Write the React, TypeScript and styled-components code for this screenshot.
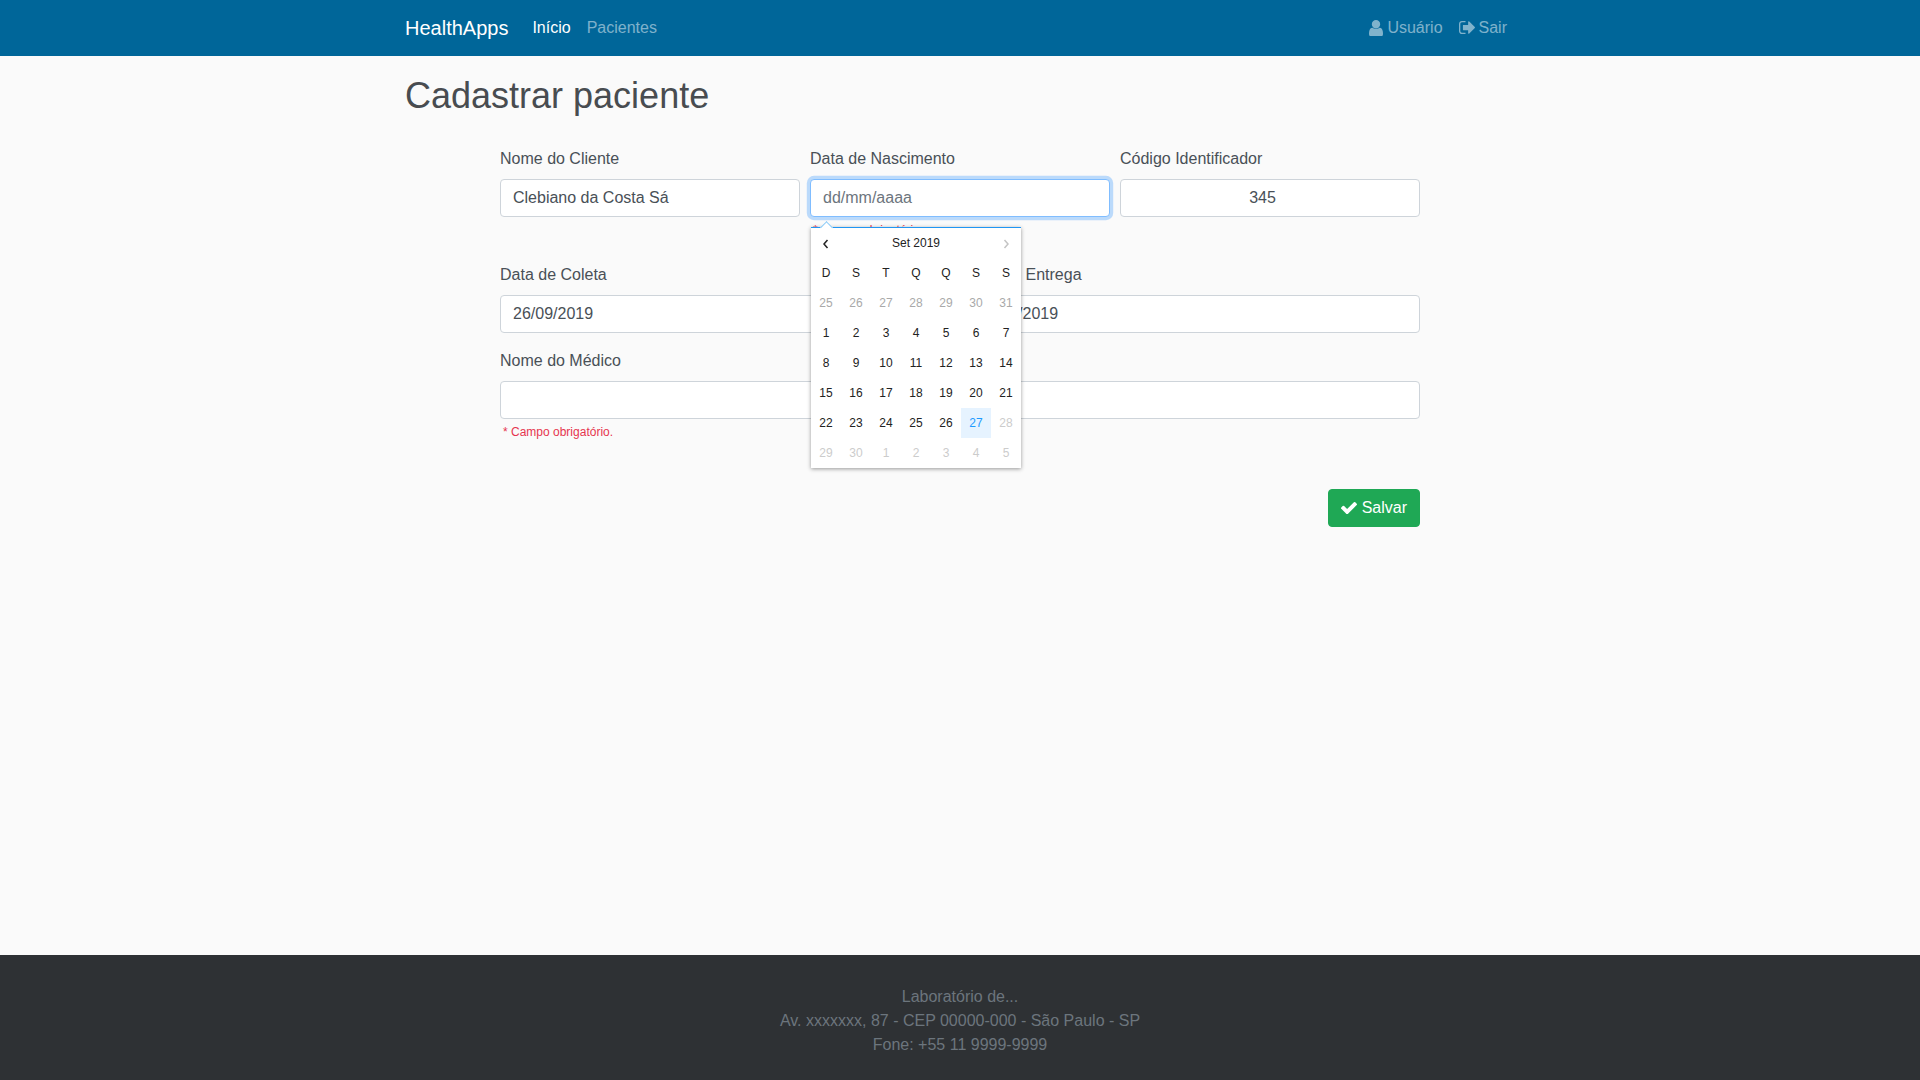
import React from "react";
import styled, { createGlobalStyle } from "styled-components";

const GlobalStyle = createGlobalStyle`
  * {
    box-sizing: border-box;
  }

  body {
    margin: 0;
    background-color: #fafafa;
    color: #495057;
    font-family: "Liberation Sans", Arial, sans-serif;
    font-size: 16px;
    line-height: 1.5;
  }
`;

const Page = styled.div`
  min-height: 100vh;
  display: flex;
  flex-direction: column;
`;

const Navbar = styled.nav`
  height: 56px;
  background-color: #006699;
  display: flex;
  justify-content: center;
`;

const NavInner = styled.div`
  width: 1140px;
  padding: 0 15px;
  display: flex;
  align-items: center;
`;

const Brand = styled.a`
  color: #fff;
  font-size: 20px;
  margin-right: 16px;
  line-height: 30px;
`;

const NavLink = styled.a<{ $active?: boolean }>`
  color: ${(props) => (props.$active ? "#fff" : "rgba(255, 255, 255, 0.5)")};
  padding: 0 8px;
  display: flex;
  align-items: center;
  gap: 4px;
`;

const NavRight = styled.div`
  margin-left: auto;
  display: flex;
`;

const Main = styled.main`
  flex: 1;
  width: 1140px;
  margin: 0 auto;
  padding: 0 15px;
`;

const Title = styled.h1`
  margin: 16px 0 27px;
  font-size: 36px;
  font-weight: 500;
  line-height: 48px;
  color: #484c50;
`;

const Form = styled.form`
  width: 920px;
  margin: 0 auto;
`;

const FormRow = styled.div<{ $columns: number }>`
  display: grid;
  grid-template-columns: repeat(${(props) => props.$columns}, 1fr);
  gap: 10px;
`;

const Field = styled.div`
  position: relative;
  margin-bottom: 16px;
`;

const Label = styled.label`
  display: block;
  margin-bottom: 8px;
`;

const Input = styled.input<{ $number?: boolean; $focused?: boolean }>`
  display: block;
  width: 100%;
  height: 38px;
  padding: 6px ${(props) => (props.$number ? "27px" : "12px")} 6px 12px;
  font: inherit;
  color: #495057;
  background-color: #fff;
  border: 1px solid ${(props) => (props.$focused ? "#80bdff" : "#ced4da")};
  border-radius: 4px;
  outline: none;
  text-align: ${(props) => (props.$number ? "center" : "left")};
  box-shadow: ${(props) =>
    props.$focused ? "0 0 0 3.2px rgba(0, 123, 255, 0.25)" : "none"};

  &::placeholder {
    color: #6c757d;
    opacity: 1;
  }
`;

const ErrorText = styled.small`
  display: block;
  margin: 4px 0 8px;
  padding-left: 3px;
  font-size: 12px;
  line-height: 18px;
  color: #e6354f;
`;

const Actions = styled.div`
  display: flex;
  justify-content: flex-end;
  margin-top: 24px;
`;

const SaveButton = styled.button`
  height: 38px;
  padding: 0 12px;
  display: flex;
  align-items: center;
  gap: 5px;
  font: inherit;
  color: #fff;
  background-color: #1fa855;
  border: 1px solid #1fa855;
  border-radius: 4px;
`;

const Footer = styled.footer`
  height: 125px;
  padding-top: 30px;
  background-color: #2e3134;
  color: #6c757d;
  text-align: center;
`;

const Calendar = styled.div`
  position: absolute;
  top: 80px;
  left: 1px;
  width: 210px;
  background-color: #fff;
  border-top: 1px solid #2196f3;
  box-shadow: 0 1px 4px rgba(0, 0, 0, 0.4);
  z-index: 10;

  &::before {
    content: "";
    position: absolute;
    top: -5px;
    left: 11px;
    width: 8px;
    height: 8px;
    background-color: #fff;
    border-top: 1px solid #86c8f7;
    border-left: 1px solid #86c8f7;
    transform: rotate(45deg);
  }
`;

const CalendarHeader = styled.div`
  height: 30px;
  display: grid;
  grid-template-columns: 30px 1fr 30px;
  align-items: center;
  text-align: center;
  font-size: 12px;
  line-height: 30px;
`;

const MonthLabel = styled.span`
  position: relative;
  color: #222;
`;

const Chevron = styled.svg<{ $muted?: boolean }>`
  width: 30px;
  height: 30px;
  fill: none;
  stroke: ${(props) => (props.$muted ? "#c4c4c4" : "#222")};
  stroke-width: 1.5;
`;

const CalendarGrid = styled.div`
  display: grid;
  grid-template-columns: repeat(7, 30px);
  grid-auto-rows: 30px;
`;

const Cell = styled.div<{ $tone?: "outside" | "faded" | "today" }>`
  display: flex;
  align-items: center;
  justify-content: center;
  font-size: 12px;
  color: ${(props) =>
    props.$tone === "outside"
      ? "#a9a9a9"
      : props.$tone === "faded"
        ? "#ccc"
        : props.$tone === "today"
          ? "#1e9bff"
          : "#222"};
  background-color: ${(props) =>
    props.$tone === "today" ? "#e6f3ff" : "transparent"};
`;

const Icon = styled.svg<{ $width: number }>`
  width: ${(props) => props.$width}px;
  flex: none;
  fill: currentColor;
`;

const USER_PATH =
  "M1536 1399q0 109-62.5 187t-150.5 78h-854q-88 0-150.5-78t-62.5-187q0-85 8.5-160.5t31.5-152 58.5-131 94-89 134.5-34.5q131 128 313 128t313-128q76 0 134.5 34.5t94 89 58.5 131 31.5 152 8.5 160.5zm-256-887q0 159-112.5 271.5t-271.5 112.5-271.5-112.5-112.5-271.5 112.5-271.5 271.5-112.5 271.5 112.5 112.5 271.5z";
const SIGN_OUT_PATH =
  "M704 1440q0 4 1 20t.5 26.5-3 23.5-10 19.5-20.5 6.5h-320q-119 0-203.5-84.5t-84.5-203.5v-704q0-119 84.5-203.5t203.5-84.5h320q13 0 22.5 9.5t9.5 22.5q0 4 1 20t.5 26.5-3 23.5-10 19.5-20.5 6.5h-320q-66 0-113 47t-47 113v704q0 66 47 113t113 47h312l11.5 1 11.5 3 8 5.5 7 9 2 13.5zm928-544q0 26-19 45l-544 544q-19 19-45 19t-45-19-19-45v-288h-448q-26 0-45-19t-19-45v-384q0-26 19-45t45-19h448v-288q0-26 19-45t45-19 45 19l544 544q19 19 19 45z";
const CHECK_PATH =
  "M1671 566q0 40-28 68l-724 724-136 136q-28 28-68 28t-68-28l-136-136-362-362q-28-28-28-68t28-68l136-136q28-28 68-28t68 28l294 295 656-657q28-28 68-28t68 28l136 136q28 28 28 68z";

const weekDays = ["D", "S", "T", "Q", "Q", "S", "S"];

type Tone = "outside" | "faded" | "today" | undefined;

const days: { label: number; tone: Tone }[] = [
  ...[25, 26, 27, 28, 29, 30, 31].map((label) => ({
    label,
    tone: "outside" as Tone,
  })),
  ...Array.from({ length: 26 }, (_, i) => ({ label: i + 1, tone: undefined })),
  { label: 27, tone: "today" },
  ...[28, 29, 30, 1, 2, 3, 4, 5].map((label) => ({
    label,
    tone: "faded" as Tone,
  })),
];

const DatePicker: React.FC = () => (
  <Calendar>
    <CalendarHeader>
      <Chevron viewBox="0 0 30 30">
        <path d="M16.5 12 L13 16 L16.5 20" />
      </Chevron>
      <MonthLabel>Set 2019</MonthLabel>
      <Chevron viewBox="0 0 30 30" $muted>
        <path d="M13.5 12 L17 16 L13.5 20" />
      </Chevron>
    </CalendarHeader>
    <CalendarGrid>
      {weekDays.map((day, i) => (
        <Cell key={i}>{day}</Cell>
      ))}
      {days.map((day, i) => (
        <Cell key={i} $tone={day.tone}>
          {day.label}
        </Cell>
      ))}
    </CalendarGrid>
  </Calendar>
);

const App: React.FC = () => (
  <Page>
    <GlobalStyle />
    <Navbar>
      <NavInner>
        <Brand>HealthApps</Brand>
        <NavLink $active>Início</NavLink>
        <NavLink>Pacientes</NavLink>
        <NavRight>
          <NavLink>
            <Icon $width={14} viewBox="256 128 1280 1536">
              <path d={USER_PATH} />
            </Icon>
            Usuário
          </NavLink>
          <NavLink>
            <Icon $width={16} viewBox="64 256 1568 1280">
              <path d={SIGN_OUT_PATH} />
            </Icon>
            Sair
          </NavLink>
        </NavRight>
      </NavInner>
    </Navbar>
    <Main>
      <Title>Cadastrar paciente</Title>
      <Form>
        <FormRow $columns={3}>
          <Field>
            <Label>Nome do Cliente</Label>
            <Input readOnly value="Clebiano da Costa Sá" />
          </Field>
          <Field>
            <Label>Data de Nascimento</Label>
            <Input readOnly $focused placeholder="dd/mm/aaaa" />
            <ErrorText>* Campo obrigatório.</ErrorText>
            <DatePicker />
          </Field>
          <Field>
            <Label>Código Identificador</Label>
            <Input readOnly $number value="345" />
          </Field>
        </FormRow>
        <FormRow $columns={2}>
          <Field>
            <Label>Data de Coleta</Label>
            <Input readOnly value="26/09/2019" />
          </Field>
          <Field>
            <Label>Data de Entrega</Label>
            <Input readOnly value="27/09/2019" />
          </Field>
        </FormRow>
        <FormRow $columns={1}>
          <Field>
            <Label>Nome do Médico</Label>
            <Input readOnly />
            <ErrorText>* Campo obrigatório.</ErrorText>
          </Field>
        </FormRow>
        <Actions>
          <SaveButton type="button">
            <Icon $width={16} viewBox="121 334 1550 1188">
              <path d={CHECK_PATH} />
            </Icon>
            Salvar
          </SaveButton>
        </Actions>
      </Form>
    </Main>
    <Footer>
      Laboratório de...
      <br />
      Av. xxxxxxx, 87 - CEP 00000-000 - São Paulo - SP
      <br />
      Fone: +55 11 9999-9999
    </Footer>
  </Page>
);

export default App;
